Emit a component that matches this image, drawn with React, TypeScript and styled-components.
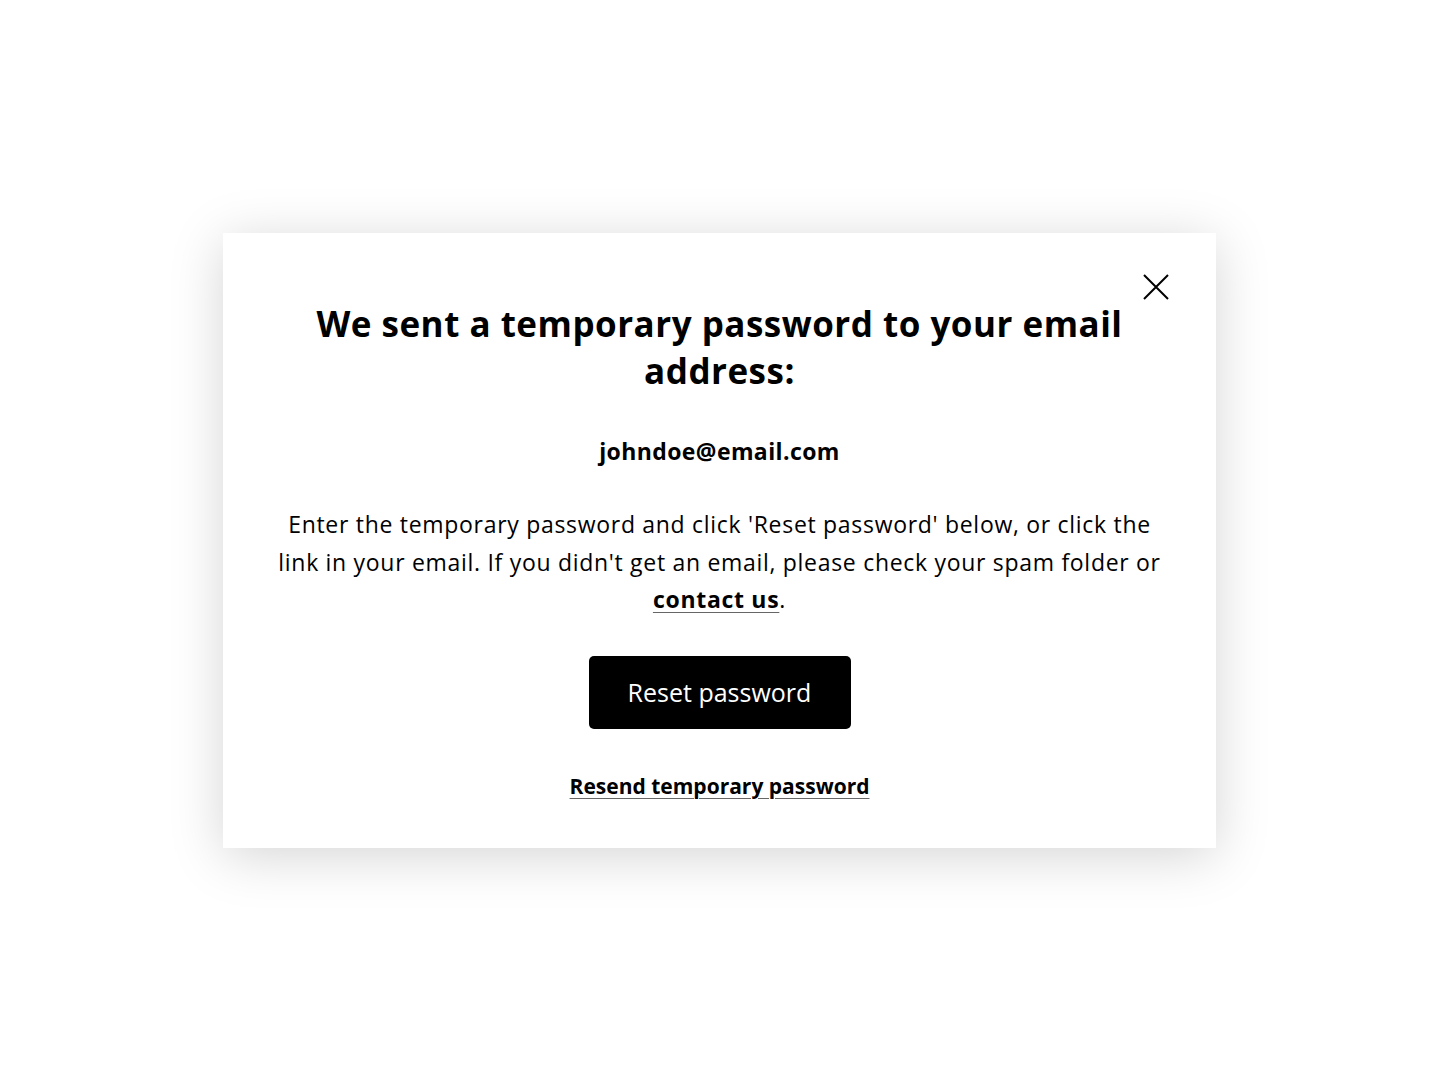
import React from "react";
import styled, { createGlobalStyle } from "styled-components";

const Global = createGlobalStyle`
  html, body { margin: 0; padding: 0; background: #ffffff; }
  body { font-family: "Open Sans", "Noto Sans", sans-serif; color: #000; }
  * { box-sizing: border-box; }
`;

const Page = styled.div`
  min-height: 1081px;
  display: flex;
  align-items: center;
  justify-content: center;
`;

const Modal = styled.div`
  position: relative;
  width: 993px;
  height: 615px;
  background: #fff;
  box-shadow: 0 8px 50px rgba(0, 0, 0, 0.17);
  padding: 67px 50px 47px;
  display: flex;
  flex-direction: column;
  align-items: center;
  text-align: center;
  margin-left: -1px;
`;

const Close = styled.button`
  position: absolute;
  top: 40px;
  right: 46px;
  width: 28px;
  height: 28px;
  padding: 0;
  border: none;
  background: transparent;
  cursor: pointer;
  display: flex;
  align-items: center;
  justify-content: center;
`;

const Title = styled.h1`
  margin: 0;
  max-width: 840px;
  font-size: 35px;
  line-height: 47px;
  font-weight: 700;
  letter-spacing: 0.5px;
`;

const Email = styled.div`
  margin-top: 42px;
  font-size: 23px;
  line-height: 30px;
  font-weight: 700;
  letter-spacing: 0.4px;
`;

const Body = styled.p`
  margin: 40px 0 0;
  font-size: 23px;
  line-height: 37.5px;
  font-weight: 400;
  letter-spacing: 0.7px;
`;

const InlineLink = styled.a`
  color: #000;
  font-weight: 700;
  text-decoration: underline;
  text-decoration-color: #666;
  text-decoration-thickness: 1px;
  text-underline-offset: 4px;
`;

const Primary = styled.button`
  margin-top: 37px;
  width: 262px;
  height: 73px;
  border: none;
  border-radius: 5px;
  background: #000;
  color: #fff;
  font-family: inherit;
  font-size: 25px;
  font-weight: 400;
  cursor: pointer;
`;

const Resend = styled(InlineLink)`
  margin-top: 42px;
  font-size: 21px;
  line-height: 30px;
  letter-spacing: 0;
`;

export default function App() {
  return (
    <>
      <Global />
      <Page>
        <Modal>
          <Close aria-label="Close">
            <svg width="26" height="26" viewBox="0 0 26 26" fill="none">
              <path d="M1 1L25 25M25 1L1 25" stroke="#000" strokeWidth="2" />
            </svg>
          </Close>
          <Title>We sent a temporary password to your email address:</Title>
          <Email>johndoe@email.com</Email>
          <Body>
            Enter the temporary password and click 'Reset password' below, or click the link in your email. If you
            didn't get an email, please check your spam folder or <InlineLink href="#">contact us</InlineLink>.
          </Body>
          <Primary>Reset password</Primary>
          <Resend href="#">Resend temporary password</Resend>
        </Modal>
      </Page>
    </>
  );
}
